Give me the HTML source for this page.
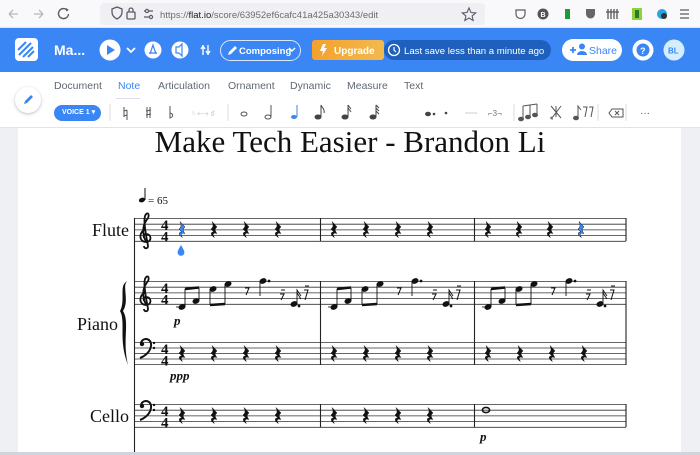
<!DOCTYPE html>
<html><head><meta charset="utf-8"><style>
*{margin:0;padding:0;box-sizing:border-box}
body{width:700px;height:455px;overflow:hidden;background:#eef0f3;font-family:"Liberation Sans",sans-serif;position:relative}
.a{position:absolute}
.tab{position:absolute;top:80px;font-size:10.5px;color:#5f6673}
</style></head><body>
<div class="a" style="left:0;top:0;width:700px;height:28px;background:#f9f9fb;border-bottom:1px solid #e3e3e6"></div>
<div class="a" style="left:100px;top:3px;width:385px;height:22px;background:#f0f0f4;border-radius:4px"></div>
<svg class="a" style="left:0;top:0" width="700" height="28">
<g stroke="#b8b8bd" stroke-width="1.3" fill="none"><path d="M9 14h9M9 14l4-4M9 14l4 4"/><path d="M34 14h9M43 14l-4-4M43 14l-4 4"/></g>
<path d="M67 10a5 5 0 1 0 1.5 4" stroke="#5b5b66" stroke-width="1.4" fill="none"/><path d="M66 8l3 2-3 1.5z" fill="#5b5b66"/>
<path d="M112 9l5-2 5 2v3c0 4-3 6-5 7-2-1-5-3-5-7z" stroke="#5b5b66" stroke-width="1.3" fill="none"/>
<rect x="127" y="12" width="8" height="7" rx="1" stroke="#5b5b66" stroke-width="1.3" fill="none"/><path d="M129 12v-2a2 2 0 0 1 4 0v2" stroke="#5b5b66" stroke-width="1.3" fill="none"/>
<g stroke="#5b5b66" stroke-width="1.2"><path d="M144 11h9M144 17h9"/><circle cx="147" cy="11" r="1.6" fill="#f0f0f4"/><circle cx="151" cy="17" r="1.6" fill="#f0f0f4"/></g>
<text x="160" y="18" font-size="9.5" fill="#6b6b73">https://<tspan fill="#222">flat.io</tspan>/score/63952ef6cafc41a425a30343/edit</text>
<path d="M469 8l2 4.5 4.7.4-3.6 3 1.1 4.6-4.2-2.5-4.2 2.5 1.1-4.6-3.6-3 4.7-.4z" stroke="#5b5b66" stroke-width="1.1" fill="none"/>
<path d="M516 10h9v4a4.5 4.5 0 0 1-9 0z" stroke="#5b5b66" stroke-width="1.2" fill="none"/>
<circle cx="543" cy="14" r="5.5" fill="#555"/><text x="540.5" y="17" font-size="7" fill="#fff" font-weight="bold">B</text>
<rect x="565" y="9" width="5" height="10" fill="#1b9a3a"/>
<path d="M586 9h9v5a4.5 4.5 0 0 1-9 0z" fill="#666"/>
<g stroke="#555" stroke-width="1.3"><path d="M608 9v10M611 9v10M614 9v10M617 9v10M606 12h13"/></g>
<rect x="632" y="8" width="10" height="12" fill="#8fd13a"/><rect x="635" y="10" width="4" height="8" fill="#2b7a2b"/>
<circle cx="662" cy="14" r="5" fill="#29a3e0"/><circle cx="664" cy="16" r="3" fill="#333"/>
<g stroke="#5b5b66" stroke-width="1.3"><path d="M680 10h9M680 14h9M680 18h9"/></g>
</svg>
<div class="a" style="left:0;top:28px;width:700px;height:44px;background:#3b86f5"></div>
<svg class="a" style="left:0;top:28px" width="700" height="44">
<rect x="15" y="10" width="23" height="23" rx="4" fill="#fff"/>
<g stroke="#3b86f5" stroke-width="2"><path d="M18 22l8-8M19 27l12-12M23 29l10-10M28 29l6-6"/></g>
<text x="54" y="27" font-size="14" fill="#fff" font-weight="bold">Ma...</text>
<circle cx="110" cy="22" r="10.5" fill="#fff"/><path d="M107 17l8 5-8 5z" fill="#3b86f5"/>
<path d="M127 20l4 4 4-4" stroke="#fff" stroke-width="1.8" fill="none"/>
<circle cx="153" cy="22" r="8.5" fill="#fff"/><path d="M150 26l3-9 3 9M149 25h8" stroke="#3b86f5" stroke-width="1.2" fill="none"/>
<circle cx="180" cy="22" r="8.5" fill="#fff"/><path d="M176 19h3l3-3v12l-3-3h-3z" stroke="#3b86f5" stroke-width="1.2" fill="none"/>
<g stroke="#fff" stroke-width="1.4"><path d="M203 17v10M208 17v10"/><path d="M201 21l2-3 2 3M206 23l2 3 2-3" fill="none"/></g>
<rect x="220.5" y="12.5" width="80" height="20" rx="10" fill="none" stroke="#fff" stroke-opacity=".8"/>
<path d="M228 27l1-3 6-6 2 2-6 6z" fill="#fff"/>
<text x="239" y="26" font-size="9.5" fill="#fff" font-weight="bold">Composing</text>
<path d="M289 20l3 3 3-3" stroke="#fff" stroke-width="1.5" fill="none"/>
<defs><linearGradient id="g" x1="0" x2="1"><stop offset="0" stop-color="#f4a12c"/><stop offset="1" stop-color="#f3b94e"/></linearGradient></defs>
<rect x="312" y="12" width="72" height="20" rx="3" fill="url(#g)"/>
<path d="M323 16l-3 7h3l-1 5 5-8h-3l2-4z" fill="#fff"/>
<text x="334" y="26" font-size="10" fill="#fff" font-weight="bold">Upgrade</text>
<rect x="384" y="12" width="167" height="20" rx="10" fill="#1f60bd"/>
<circle cx="394" cy="22" r="5.5" stroke="#fff" stroke-width="1.3" fill="none"/><path d="M394 19v3l2 2" stroke="#fff" stroke-width="1.2" fill="none"/>
<text x="404" y="26" font-size="9.6" fill="#fff">Last save less than a minute ago</text>
<rect x="562" y="11" width="60" height="22" rx="11" fill="#fff"/>
<path d="M570 22h6M573 19v6" stroke="#3b86f5" stroke-width="1.8"/><circle cx="582" cy="18.5" r="3" fill="#3b86f5"/><path d="M577 27a5 4 0 0 1 10 0z" fill="#3b86f5"/>
<text x="589" y="26" font-size="10.5" fill="#3b86f5">Share</text>
<circle cx="643" cy="22" r="10.5" fill="#fff"/><circle cx="643" cy="22" r="6.5" fill="#3b86f5"/><text x="640" y="26" font-size="9" fill="#fff" font-weight="bold">?</text>
<circle cx="674" cy="22" r="10.5" fill="#d5eefd"/><text x="668" y="25.5" font-size="8" fill="#3b86f5" font-weight="bold">BL</text>
</svg>
<div class="a" style="left:0;top:72px;width:700px;height:56px;background:#fff;border-bottom:1px solid #e1e3e8"></div>
<div class="tab" style="left:54px">Document</div>
<div class="tab" style="left:118px;color:#3b86f5">Note</div>
<div class="a" style="left:116px;top:98px;width:24px;height:1px;background:#dde"></div>
<div class="tab" style="left:158px">Articulation</div>
<div class="tab" style="left:228px">Ornament</div>
<div class="tab" style="left:290px">Dynamic</div>
<div class="tab" style="left:347px">Measure</div>
<div class="tab" style="left:404px">Text</div>
<div class="a" style="left:15px;top:87px;width:26px;height:26px;border-radius:13px;background:#fff;box-shadow:0 1px 3px rgba(0,0,0,.25)"></div>
<svg class="a" style="left:15px;top:87px" width="26" height="26"><path d="M9 17l1-3 6-6 2 2-6 6z" fill="#3b86f5"/></svg>
<div class="a" style="left:54px;top:105px;width:47px;height:16px;border-radius:8px;background:#3b86f5;color:#fff;font-size:7px;font-weight:bold;line-height:16px;padding-left:8px">VOICE 1 ▾</div>
<svg class="a" style="left:0;top:98px" width="700" height="30">
<g stroke="#ddd"><path d="M110 6v17M228 6v17M514 6v17M598 6v17M626 6v17"/></g>
<g fill="none" stroke="#555" stroke-width="1"><path d="M124 9v10M127 12v10M124 13l3-1M124 18l3-1"/><path d="M147 9v11M150 9v11M146 13l5-1M146 17l5-1"/><path d="M170 8v12c3-1 4-4 0-5"/></g>
<text x="192" y="18" font-size="8" fill="#ccc">♮ ⟷ ♯</text>
<ellipse cx="244" cy="16" rx="3" ry="2" stroke="#555" fill="none"/>
<ellipse cx="268" cy="19" rx="3" ry="2" stroke="#555" fill="none"/><path d="M271 19V7" stroke="#555"/>
<ellipse cx="294" cy="19" rx="3" ry="2" fill="#3b86f5"/><path d="M297 19V7" stroke="#3b86f5"/>
<g fill="#444" stroke="#444"><ellipse cx="318" cy="19" rx="3" ry="2"/><path d="M321 19V7c1 3 4 4 3 8" fill="none"/>
<ellipse cx="345" cy="19" rx="3" ry="2"/><path d="M348 19V7M348 7l3 4M348 10l3 4" fill="none"/>
<ellipse cx="373" cy="19" rx="3" ry="2"/><path d="M376 19V7M376 7l3 3M376 10l3 3M376 13l3 3" fill="none"/>
<ellipse cx="428" cy="16" rx="2.5" ry="1.8"/><circle cx="434" cy="16" r=".8"/><circle cx="446" cy="15" r=".8"/></g>
<path d="M465 15h12" stroke="#ccc"/>
<text x="488" y="18" font-size="8" fill="#777">⌐3¬</text>
<g fill="#555" stroke="#555"><ellipse cx="521" cy="21" rx="2.5" ry="1.8"/><ellipse cx="528" cy="19" rx="2.5" ry="1.8"/><ellipse cx="535" cy="17" rx="2.5" ry="1.8"/><path d="M523 21V8M530 19V7M537 17V6M523 8l14-2" fill="none"/>
<path d="M553 21c-3 0-3-2 0-2M556 19V8M551 8l10 12M561 8l-9 12" fill="none"/>
<ellipse cx="576" cy="20" rx="2.5" ry="1.8"/><path d="M578 20V8l3 4M583 9h4l-2 10M589 9h4l-2 10" fill="none"/>
<path d="M612 11h11v8h-11l-3-4z M615 13l4 4M619 13l-4 4" fill="none"/></g>
<text x="640" y="18" font-size="10" fill="#555">···</text>
</svg>
<div class="a" style="left:18px;top:128px;width:663px;height:324px;background:#fff"></div>
<div class="a" style="left:0;top:452px;width:700px;height:3px;background:#cfd5dc"></div>
<div class="a" style="left:0;top:124px;width:700px;text-align:center;font-family:'Liberation Serif',serif;font-size:31px;color:#111">Make Tech Easier - Brandon Li</div>
<svg class="a" style="left:0;top:0" width="700" height="455" font-family="Liberation Serif">
<defs>
<path id="r" d="M-2 -8.5 L3 -3 C0.5 -1 0.5 0.5 3 3.5 C0 2.5 -2.5 3.5 0.5 7.5 C-4 5 -3.5 1.5 0 2 L-3 -1 C-0.5 -3 -0.5 -5 -2 -8.5Z" stroke="#111" stroke-width=".5"/>
<g id="tc" fill="none" stroke="#111" stroke-width="1.8"><path d="M2 -4 C-6 -1 -5 9 2 9 C8 9 8 1 2 1 C-1 1 -1 5 1 5 M2 9 C-4 -4 1 -11 4 -15 C6 -19 3 -22 1 -17 C-1 -10 3 6 4 13 C4 16 0 16 0 13"/></g>
<g id="bc"><path d="M-3 -5 C-3 -12 8 -12 7 -3 C6 4 -1 8 -4 9" fill="none" stroke="#111" stroke-width="2"/><circle cx="-2" cy="-5" r="2.2" fill="#111"/><circle cx="10" cy="-6" r="1.2" fill="#111"/><circle cx="10" cy="-1" r="1.2" fill="#111"/></g>
<g id="ts" font-family="Liberation Serif" font-weight="bold" font-size="15" fill="#111"><text x="0" y="0">4</text><text x="0" y="11.5">4</text></g>
</defs>
<g stroke="#333" stroke-width=".8">
<path d="M135 218.5h491M135 224.2h491M135 229.9h491M135 235.6h491M135 241.3h491"/>
<path d="M135 281.5h491M135 287.2h491M135 292.9h491M135 298.6h491M135 304.3h491"/>
<path d="M135 342.5h491M135 348h491M135 353.5h491M135 359h491M135 364.5h491"/>
<path d="M135 404.5h491M135 410.2h491M135 415.9h491M135 421.6h491M135 427.3h491"/>
</g>
<g stroke="#222" stroke-width="1.1">
<path d="M134.5 218v234"/>
<path d="M320.5 218v23M474.5 218v23M626 218v23"/>
<path d="M320.5 281v84M474.5 281v84M626 281v84"/>
<path d="M320.5 404v23M474.5 404v23M626 404v23"/>
</g>
<path d="M128 281 C118 284 126 300 120 311 C126 322 118 340 128 365 C122 340 130 322 123 311 C130 300 121 284 128 281Z" fill="#111"/>
<text x="129" y="236" font-size="18" text-anchor="end" fill="#111">Flute</text>
<text x="118" y="330" font-size="18" text-anchor="end" fill="#111">Piano</text>
<text x="129" y="422" font-size="18" text-anchor="end" fill="#111">Cello</text>
<use href="#tc" x="144" y="233"/><use href="#tc" x="144" y="296"/>
<use href="#bc" x="144" y="349"/><use href="#bc" x="144" y="411"/>
<use href="#ts" x="161" y="230"/><use href="#ts" x="161" y="293"/><use href="#ts" x="161" y="354"/><use href="#ts" x="161" y="416"/>
<ellipse cx="142" cy="200" rx="3.2" ry="2.3" fill="#111" transform="rotate(-20 142 200)"/><path d="M145 200v-12" stroke="#111" stroke-width="1"/>
<text x="148" y="204" font-size="11" fill="#111">= 65</text>
<g fill="#111">
<use href="#r" x="214" y="230"/><use href="#r" x="246" y="230"/><use href="#r" x="278" y="230"/>
<use href="#r" x="334" y="230"/><use href="#r" x="366" y="230"/><use href="#r" x="398" y="230"/><use href="#r" x="430" y="230"/>
<use href="#r" x="488" y="230"/><use href="#r" x="519" y="230"/><use href="#r" x="550" y="230"/>
<g id="br"><use href="#r" x="182" y="354"/><use href="#r" x="214" y="354"/><use href="#r" x="246" y="354"/><use href="#r" x="278" y="354"/></g>
<use href="#br" x="152"/><use href="#br" x="306"/>
<use href="#br" y="62"/><use href="#br" x="152" y="62"/>
</g>
<g fill="#3b86f5"><g stroke="#3b86f5"><use href="#r" x="182" y="230" style="stroke:#3b86f5"/><use href="#r" x="581" y="230"/></g>
<path d="M181 245 C178 250 177 252 178 254 a3.4 3.4 0 0 0 6 0 C185 252 184 250 181 245Z"/></g>
<ellipse cx="486" cy="410" rx="3.6" ry="2.6" fill="none" stroke="#111" stroke-width="1.6"/>
<g font-weight="bold" font-style="italic" fill="#111" font-size="13">
<text x="174" y="325">p</text><text x="170" y="380">ppp</text><text x="480" y="441">p</text></g>
<g id="pm" fill="#111" stroke="#111">
<ellipse cx="182" cy="307" rx="3.1" ry="2.2" transform="rotate(-20 182 307)"/><path d="M182 307h-6" stroke-width=".8"/>
<ellipse cx="196" cy="301" rx="3.1" ry="2.2" transform="rotate(-20 196 301)"/>
<path d="M185 307V289M199 301V288" stroke-width=".9"/><path d="M185 289l14-1.5" stroke-width="2.4"/>
<ellipse cx="213" cy="289" rx="3.1" ry="2.2" transform="rotate(-20 213 289)"/>
<ellipse cx="228" cy="284" rx="3.1" ry="2.2" transform="rotate(-20 228 284)"/>
<path d="M210 289V305M225 284V304" stroke-width=".9"/><path d="M210 305l15-1" stroke-width="2.4"/>
<path d="M245 288h4l-3 7" fill="none" stroke-width="1"/>
<ellipse cx="263" cy="281" rx="3.1" ry="2.2" transform="rotate(-20 263 281)"/><circle cx="269" cy="281" r=".9"/>
<path d="M260 281V296" stroke-width=".9" fill="none"/>
<path d="M280 294h4l-3 6M281 290h4" fill="none" stroke-width="1"/>
<ellipse cx="294" cy="304" rx="3.1" ry="2.2" transform="rotate(-20 294 304)"/><circle cx="299" cy="306" r=".9"/>
<path d="M297 304V290l4 6M297 293l4 6" fill="none" stroke-width=".9"/>
<path d="M304 290h4l-3 10M305 286h4" fill="none" stroke-width="1"/>
</g>
<use href="#pm" x="152"/><use href="#pm" x="306"/>
</svg>
</body></html>
